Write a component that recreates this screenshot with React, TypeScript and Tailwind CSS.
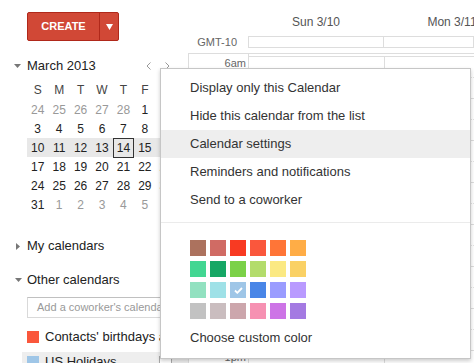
import React from "react";

const swatches = [
  ["#ac725e", "#d06b64", "#f83a22", "#fa573c", "#ff7537", "#ffad46"],
  ["#42d692", "#16a765", "#7bd148", "#b3dc6c", "#fbe983", "#fad165"],
  ["#92e1c0", "#9fe1e7", "#9fc6e7", "#4986e7", "#9a9cff", "#b99aff"],
  ["#c2c2c2", "#cabdbf", "#cca6ac", "#f691b2", "#cd74e6", "#a47ae2"],
];

// [day, inMonth]
const weeks: [number, boolean][][] = [
  [[24, false], [25, false], [26, false], [27, false], [28, false], [1, true], [2, true]],
  [[3, true], [4, true], [5, true], [6, true], [7, true], [8, true], [9, true]],
  [[10, true], [11, true], [12, true], [13, true], [14, true], [15, true], [16, true]],
  [[17, true], [18, true], [19, true], [20, true], [21, true], [22, true], [23, true]],
  [[24, true], [25, true], [26, true], [27, true], [28, true], [29, true], [30, true]],
  [[31, true], [1, false], [2, false], [3, false], [4, false], [5, false], [6, false]],
];

const menuItems = [
  "Display only this Calendar",
  "Hide this calendar from the list",
  "Calendar settings",
  "Reminders and notifications",
  "Send to a coworker",
];

const hours = ["6am", "7am", "8am", "9am", "10am", "11am", "12pm", "1pm"];

function TriDown() {
  return (
    <svg width="7" height="4" viewBox="0 0 7 4" className="block">
      <path d="M0 0h7L3.5 4z" fill="#777" />
    </svg>
  );
}

function TriRight() {
  return (
    <svg width="4" height="7" viewBox="0 0 4 7" className="block">
      <path d="M0 0l4 3.5L0 7z" fill="#777" />
    </svg>
  );
}

function HalfHourRows() {
  return (
    <div className="border-t border-[#ddd]">
      {Array.from({ length: 15 }).map((_, i) => (
        <div
          key={i}
          className={
            i % 2 === 0
              ? "h-[21px] border-b border-dotted border-[#e2e2e2]"
              : "h-[21px] border-b border-[#ddd]"
          }
        />
      ))}
    </div>
  );
}

export default function App() {
  return (
    <div className="relative w-[474px] h-[363px] overflow-hidden bg-white text-[#222] font-['Liberation_Sans',Arial,sans-serif]">
      <div className="flex h-full">
        {/* Sidebar */}
        <div className="w-[188px] shrink-0">
          <div className="pt-[12px] pl-[27px]">
            <div className="flex h-[29px] w-[92px] rounded-[2px] border border-[#b0281a] bg-[#d14836]">
              <div className="w-[71px] flex items-center justify-center text-[11px] font-bold text-white">
                CREATE
              </div>
              <div className="flex-1 border-l border-[#b0281a] flex items-center justify-center">
                <svg width="7" height="6" viewBox="0 0 7 6">
                  <path d="M0 0h7L3.5 6z" fill="#fff" />
                </svg>
              </div>
            </div>
          </div>

          {/* Month header */}
          <div className="mt-[15px] h-[20px] flex items-center">
            <div className="w-[27px] pl-[14px]">
              <TriDown />
            </div>
            <span className="text-[13px]">March 2013</span>
            <div className="ml-auto mr-[18px] flex items-center gap-[14px]">
              <svg width="5" height="8" viewBox="0 0 5 8">
                <path d="M4.5 0.5L1 4l3.5 3.5" fill="none" stroke="#999" strokeWidth="1" />
              </svg>
              <svg width="5" height="8" viewBox="0 0 5 8">
                <path d="M0.5 0.5L4 4L0.5 7.5" fill="none" stroke="#999" strokeWidth="1" />
              </svg>
            </div>
          </div>

          {/* Mini calendar */}
          <div className="ml-[27px] mt-[4px] w-[150px] text-[12px]">
            <div className="grid grid-cols-7 h-[19px] mb-[1px] text-[#444]">
              {["S", "M", "T", "W", "T", "F", "S"].map((d, i) => (
                <div key={i} className="flex items-center justify-center">
                  {d}
                </div>
              ))}
            </div>
            {weeks.map((w, wi) => (
              <div key={wi} className={wi === 2 ? "grid grid-cols-7 h-[19px] bg-[#e8e8e8]" : "grid grid-cols-7 h-[19px]"}>
                {w.map(([d, inMonth], di) => (
                  <div
                    key={di}
                    className={
                      (wi === 2 && di === 4 ? "border border-[#333] " : "") +
                      "flex items-center justify-center " +
                      (inMonth ? "text-[#222]" : "text-[#999]")
                    }
                  >
                    {d}
                  </div>
                ))}
              </div>
            ))}
          </div>

          <div className="mt-[22px] h-[20px] flex items-center">
            <div className="w-[27px] pl-[16px]">
              <TriRight />
            </div>
            <span className="text-[13px]">My calendars</span>
          </div>

          <div className="mt-[14px] h-[20px] flex items-center">
            <div className="w-[27px] pl-[15px]">
              <TriDown />
            </div>
            <span className="text-[13px]">Other calendars</span>
          </div>

          <div className="ml-[27px] mt-[7px] h-[21px] w-[150px] border border-[#d9d9d9] border-t-[#c0c0c0] flex items-center pl-[9px] text-[11px] text-[#999] whitespace-nowrap overflow-hidden">
            Add a coworker's calendar
          </div>

          <div className="ml-[27px] mt-[10px] h-[18px] flex items-center gap-[6px] text-[13px] whitespace-nowrap">
            <div className="w-[12px] h-[12px] shrink-0 bg-[#fa573c]" />
            <span>Contacts' birthdays and Events</span>
          </div>

          <div className="ml-[22px] mt-[6px] h-[20px] bg-[#eee] flex items-center pl-[5px] gap-[6px] text-[13px] whitespace-nowrap">
            <div className="w-[12px] h-[12px] shrink-0 bg-[#9fc6e7]" />
            <span>US Holidays</span>
            <div className="ml-auto mr-[16px] w-[13px] h-[13px] shrink-0 border border-[#aaa] bg-white" />
          </div>
        </div>

        {/* Main grid */}
        <div className="flex-1 min-w-0 overflow-hidden flex flex-col">
          <div className="h-[53px] shrink-0">
            <div className="flex pt-[15px] text-[12px] leading-[14px] text-[#555] whitespace-nowrap">
              <div className="w-[60px] shrink-0" />
              <div className="w-[136px] shrink-0 text-center">Sun 3/10</div>
              <div className="w-[136px] shrink-0 text-center">Mon 3/11</div>
            </div>
            <div className="flex mt-[7px] h-[12px]">
              <div className="w-[60px] shrink-0 text-right pr-[11px] text-[11px] leading-[12px] text-[#666]">
                GMT-10
              </div>
              <div className="flex-1 flex border border-[#ddd]">
                <div className="w-[135px] shrink-0 border-r border-[#ddd]" />
              </div>
            </div>
          </div>

          <div className="flex-1 flex border-t border-l border-[#ddd]">
            <div className="w-[59px] shrink-0 pt-[3px]">
              {hours.map((h) => (
                <div key={h} className="h-[42px] text-right pr-[2px] text-[11px] leading-[13px] text-[#666]">
                  {h}
                </div>
              ))}
            </div>
            <div className="flex-1 flex border-l border-[#ddd] pt-[2px]">
              <div className="w-[136px] shrink-0 border-r border-[#ddd]">
                <HalfHourRows />
              </div>
              <div className="flex-1">
                <HalfHourRows />
              </div>
            </div>
          </div>
        </div>
      </div>

      {/* Context menu */}
      <div className="absolute left-[160px] top-[68px] w-[311px] h-[291px] bg-white border border-[#c6c6c6] shadow-[0_2px_4px_rgba(0,0,0,0.2)] pt-[5px] text-[13px] text-[#333]">
        {menuItems.map((item) => (
          <div
            key={item}
            className={
              item === "Calendar settings"
                ? "h-[28px] flex items-center pl-[29px] bg-[#eee]"
                : "h-[28px] flex items-center pl-[29px]"
            }
          >
            {item}
          </div>
        ))}
        <div className="mt-[8px] h-px bg-[#ebebeb]" />
        <div className="pl-[29px] mt-[17px] grid grid-cols-[repeat(6,16px)] gap-x-[4px] gap-y-[5px]">
          {swatches.flat().map((c, i) => (
            <div key={i} className="w-[16px] h-[16px] flex items-center justify-center" style={{ backgroundColor: c }}>
              {i === 14 && (
                <svg width="9" height="7" viewBox="0 0 9 7">
                  <path d="M1 3.5l2.3 2.3L8 1" fill="none" stroke="#fff" strokeWidth="1.8" />
                </svg>
              )}
            </div>
          ))}
        </div>
        <div className="mt-[5px] h-[28px] flex items-center pl-[29px]">Choose custom color</div>
      </div>
    </div>
  );
}
